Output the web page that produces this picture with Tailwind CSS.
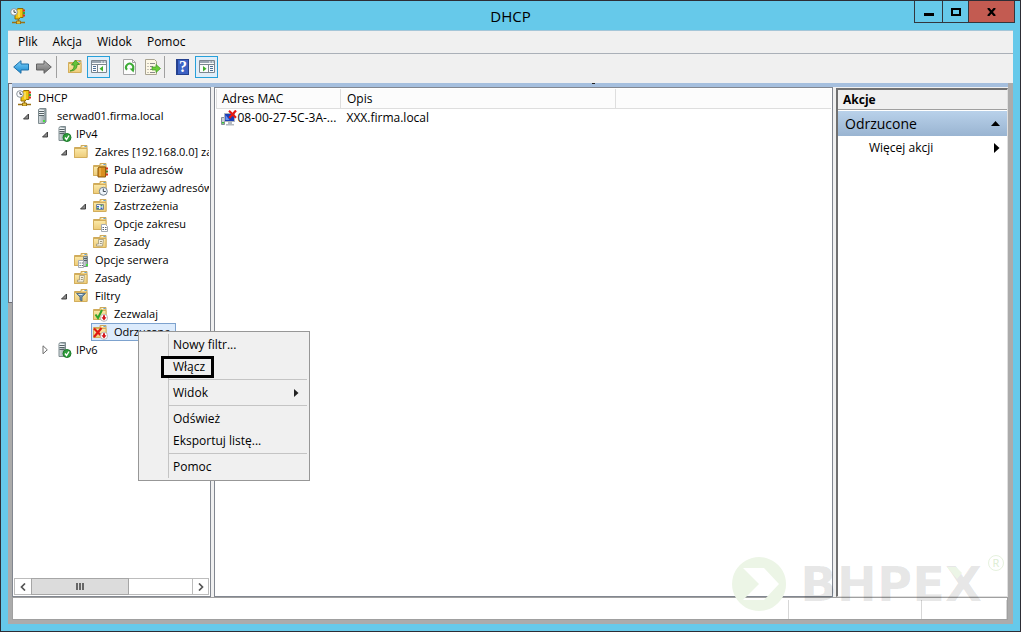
<!DOCTYPE html>
<html lang="pl">
<head>
<meta charset="utf-8">
<title>DHCP</title>
<meta name="viewport" content="width=device-width, initial-scale=1">
<script src="https://cdn.jsdelivr.net/npm/@tailwindcss/browser@4"></script>
</head>
<body class="relative flex h-screen flex-col overflow-hidden border border-[#2d2d35] bg-[#66c9ea] px-[7px] pb-[7px] font-['Open_Sans','Noto_Sans',sans-serif] text-[12px] leading-[18px] text-black">

<svg class="absolute size-0" aria-hidden="true">
  <defs>
    <linearGradient id="gf" x1="0" y1="0" x2="0" y2="1"><stop offset="0" stop-color="#fbe9a9"/><stop offset="1" stop-color="#edcb78"/></linearGradient>
    <linearGradient id="gs" x1="0" y1="0" x2="1" y2="0"><stop offset="0" stop-color="#d5dde0"/><stop offset="1" stop-color="#8b989c"/></linearGradient>
    <linearGradient id="gb" x1="0" y1="0" x2="0" y2="1"><stop offset="0" stop-color="#7fd0f8"/><stop offset="1" stop-color="#1688d0"/></linearGradient>
    <linearGradient id="gg" x1="0" y1="0" x2="0" y2="1"><stop offset="0" stop-color="#b5b5b5"/><stop offset="1" stop-color="#6c6c6c"/></linearGradient>
    <symbol id="folder" viewBox="0 0 16 16">
      <path d="M1.500 3.500h6.500v-2h6v12h-12.500z" fill="#f0d084" stroke="#cfaa5a"/>
      <path d="M9.500 2.500h2" stroke="#fff8dc"/><path d="M11.500 2.500h2" stroke="#5ba4e0"/>
      <path d="M1.500 4.500h12.500v9h-12.500z" fill="url(#gf)" stroke="#d3ae5c"/>
    </symbol>
    <symbol id="server" viewBox="0 0 16 16">
      <path d="M2.500 1.500l1.500-1h6v13.500l-1.500 1.500h-6z" fill="url(#gs)" stroke="#7f8c90"/>
      <path d="M3 3.500h5M3 5.500h5M3 7.500h5" stroke="#566266"/><path d="M3 2.500h5M3 4.500h5M3 6.500h5" stroke="#eef3f4"/>
      <path d="M7 12h2v2H7z" fill="#42e03c"/>
    </symbol>
    <symbol id="serverok" viewBox="0 0 16 16">
      <path d="M2 1.500l1.500-1h5v13l-1 1h-5.500z" fill="url(#gs)" stroke="#7f8c90"/>
      <path d="M2.500 3.500h5M2.500 5.500h5M2.500 7.500h5" stroke="#566266"/><path d="M2.500 2.500h5M2.500 4.500h5" stroke="#eef3f4"/>
      <circle cx="10" cy="11.500" r="4" fill="#2f9e3b" stroke="#1c7a2a"/>
      <path d="M8 11.500l1.500 2 2.500-4" fill="none" stroke="#fff" stroke-width="1.400"/>
    </symbol>
    <symbol id="dhcp" viewBox="0 0 16 16">
      <path d="M6 2l2-1.500h5v9h-2.500L9 11H5V7z" fill="#f0c30e" stroke="#8f6a08"/>
      <path d="M9 2v7" stroke="#fff09a"/>
      <path d="M13 2.500h2M13 7.500h2" stroke="#e02f1f" stroke-width="2"/><path d="M13 5h2" stroke="#36a83b" stroke-width="2"/>
      <path d="M8.500 11v3M2 14.500h13" stroke="#9a7216" stroke-width="1.500"/><path d="M6.500 13h4v3h-4z" fill="#e8c63d" stroke="#9a7216"/>
      <circle cx="4" cy="4" r="3.300" fill="#fafcff" stroke="#8c949c"/><path d="M4 2v2.300h2" fill="none" stroke="#444"/>
    </symbol>
    <symbol id="pool" viewBox="0 0 16 16"><use href="#folder"/>
      <path d="M6 6l1.500-1h6v10h-7.500z" fill="#d98f1f" stroke="#8b5a10"/><path d="M8 6v8" stroke="#f7c76a"/>
      <path d="M14 6.500h2M14 12.500h2" stroke="#d8321f" stroke-width="2"/><path d="M14 9.500h2" stroke="#4a7f2a" stroke-width="2"/></symbol>
    <symbol id="lease" viewBox="0 0 16 16"><use href="#folder"/>
      <circle cx="11.300" cy="11.300" r="4" fill="#eef4fb" stroke="#71808f"/><path d="M11.300 8.500v3h2.500" fill="none" stroke="#3b4652"/></symbol>
    <symbol id="reserv" viewBox="0 0 16 16"><use href="#folder"/>
      <path d="M4.500 6.500h7v5h-7z" fill="#f4f7fa" stroke="#7b8791"/><path d="M5 8h2v1.500h-2z M8.500 9.500h2V11h-2z" fill="#2f62c0"/><path d="M8.500 7h2v1.500h-2zM5 10h2v1h-2z" fill="#4d9a48"/></symbol>
    <symbol id="opts" viewBox="0 0 16 16"><use href="#folder"/>
      <path d="M9.500 8.500h4l2 2v5h-6z" fill="#fff" stroke="#a5abb2"/><path d="M10.500 11.500h1.500M13 11.500h1.500M10.500 13.500h1.500M13 13.500h1.500" stroke="#5b6672"/></symbol>
    <symbol id="srvopts" viewBox="0 0 16 16"><use href="#folder"/>
      <path d="M10.500 4.500h4v10h-4z" fill="url(#gs)" stroke="#7f8c90"/><path d="M11 6.500h3M11 8.500h3" stroke="#566266"/><path d="M13 12h2v2h-2z" fill="#42e03c"/>
      <path d="M5.500 8.500h5v7h-5z" fill="#fff" stroke="#a5abb2"/><path d="M6.500 11h1.300M8.700 11h1.300M6.500 13.500h1.300M8.700 13.500h1.300" stroke="#5b6672"/></symbol>
    <symbol id="policy" viewBox="0 0 16 16"><use href="#folder"/>
      <path d="M6.500 5.500h5l-1 6.500h-6v-2h2z" fill="#f3eee0" stroke="#a09878" stroke-width=".8"/><path d="M8 7.500h2M7.800 9.500h2" stroke="#a09878"/></symbol>
    <symbol id="filter" viewBox="0 0 16 16"><use href="#folder"/>
      <path d="M3.500 5.500h9l-3.500 3.500v4l-2-1v-3z" fill="#6c8dab" stroke="#46647f" stroke-width=".8"/><path d="M5.500 6.500h4" stroke="#d8e7f2"/></symbol>
    <symbol id="down" viewBox="0 0 16 16"><circle cx="12" cy="11.800" r="3.600" fill="#fff" stroke="#a9a9a9" stroke-width=".8"/><path d="M11 9.300h2v2h1.600L12 14.500l-2.600-3.200H11z" fill="#d3151a"/></symbol>
    <symbol id="allow" viewBox="0 0 16 16"><use href="#folder"/><path d="M3.500 8.500l2.500 3.500 4-8" fill="none" stroke="#2fa52b" stroke-width="2"/><use href="#down"/></symbol>
    <symbol id="deny" viewBox="0 0 16 16"><use href="#folder"/><path d="M2 4.500l8 8M9.500 4l-7.500 9" fill="none" stroke="#e01b12" stroke-width="2.200"/><use href="#down"/></symbol>
    <symbol id="open" viewBox="0 0 8 8"><path d="M6.500 2v5h-5z" fill="#8a8a8a" stroke="#333" stroke-width=".9"/></symbol>
    <symbol id="closed" viewBox="0 0 8 10"><path d="M2 .8v8L6.300 4.800z" fill="#fff" stroke="#6e6e6e"/></symbol>
    <symbol id="pc" viewBox="0 0 16 16">
      <path d="M.5 7.500h3v7h-3z" fill="#c9d0d6" stroke="#868e96"/><path d="M1 12h2v1.500H1z" fill="#35c035"/>
      <path d="M3.500 3.500h10v8h-10z" fill="#1a3fb8" stroke="#aeb4bd"/><path d="M4.500 5l4 5h-4z" fill="#6a93ef"/>
      <path d="M7 12h4v2h2v1.500H5V14h2z" fill="#b3b9bf"/>
      <path d="M8 .8l7 7M15 .5L8.300 8" stroke="#e51a14" stroke-width="2.200"/></symbol>
  </defs>
</svg>

<header class="relative flex h-[29px] shrink-0 items-center">
  <svg class="ml-[2px] size-4"><use href="#dhcp"/></svg>
  <h1 class="-ml-[18px] flex-1 text-center text-[15px]">DHCP</h1>
  <div class="absolute -top-px -right-[2px] flex h-[23px] border border-[#33363d]">
    <button class="flex w-[27px] items-center justify-center" aria-label="Minimalizuj"><svg class="h-[10px] w-[10px]"><path d="M0 6h10v3H0z"/></svg></button>
    <button class="flex w-[26px] items-center justify-center border-l border-[#33363d]" aria-label="Maksymalizuj"><svg class="h-[8px] w-[10px]"><path d="M1 1h8v6H1z" fill="none" stroke="#000" stroke-width="2"/></svg></button>
    <button class="flex w-[46px] items-center justify-center border-l border-[#33363d] bg-[#c35b51]" aria-label="Zamknij"><svg class="h-[8px] w-[9px]"><path d="M1 0l7 8M8 0L1 8" fill="none" stroke="#000" stroke-width="2.200"/></svg></button>
  </div>
</header>

<nav class="flex h-[24px] shrink-0 items-center gap-[15px] border-y border-t-[#a5c6d8] border-b-[#aab0b8] bg-[#f0f0f0] pl-[10px]">
  <button>Plik</button><button>Akcja</button><button>Widok</button><button>Pomoc</button>
</nav>

<div class="flex h-[29px] shrink-0 items-center bg-[#f0f0f0] pb-[4px] pl-[5px]" role="toolbar">
  <button aria-label="Wstecz"><svg class="h-[16px] w-[16px]"><path d="M.7 8L8 1.700V5h7.500v6H8v3.300z" fill="url(#gb)" stroke="#1c6fa8"/></svg></button>
  <button class="ml-[7px]" aria-label="Dalej"><svg class="h-[16px] w-[16px]"><path d="M15.300 8L8 1.700V5H.5v6H8v3.300z" fill="url(#gg)" stroke="#626262"/></svg></button>
  <span class="ml-[4px] h-[22px] w-px bg-[#a0a0a0]"></span>
  <button class="ml-[10px]" aria-label="W górę"><svg class="size-4" viewBox="0 0 16 16"><use href="#folder"/><path d="M3 12c3-1 4.500-3 4-6H4.500L8.500 1l4 4.500H10c.3 4-2.500 6.500-7 6.500z" fill="#62c33a" stroke="#3d8f22" stroke-width=".8"/></svg></button>
  <button class="ml-[4px] flex h-[22px] w-[23px] items-center justify-center border border-[#26a0da] bg-[#e0edf8]" aria-label="Pokaż drzewo konsoli"><svg class="h-[13px] w-[16px]"><path d="M.5.500h15v12H.5z" fill="#fbfbfb" stroke="#7c868f"/><path d="M1 1h14v2H1z" fill="#9aa6b1"/><path d="M10 2h1.500M13 2h1.500" stroke="#fff"/><path d="M1 4.500h14M6.500 5v8" stroke="#7c868f"/><path d="M2 6.500h3M2 8.500h3M2 10.500h3" stroke="#4b6f97"/><path d="M12 6v5.500L8.500 8.800z" fill="#3fae2a"/></svg></button>
  <button class="ml-[13px]" aria-label="Odśwież"><svg class="h-[16px] w-[13px]"><path d="M.5.500h9l3 3v12H.5z" fill="#fdfdfd" stroke="#a5a5a5"/><path d="M9.500.5v3h3" fill="none" stroke="#a5a5a5"/><path d="M4 10.800a3.600 3.600 0 1 1 5.500-.3" fill="none" stroke="#3cab35" stroke-width="2"/><path d="M6.500 9.500h5l-1 4z" fill="#3cab35"/></svg></button>
  <button class="ml-[9px]" aria-label="Eksportuj listę"><svg class="h-[16px] w-[16px]"><path d="M.5.500h9l2 2v13H.5z" fill="#fdf8e6" stroke="#a9a491"/><path d="M2.500 4.500h1M5 4.500h5M2.500 7.500h1M5 7.500h3M2.500 10.500h1M5 10.500h3M2.500 13.500h1M5 13.500h5" stroke="#8b8b8b"/><path d="M7 8h4V5.500l4.500 4-4.500 4V11H7z" fill="#6bcf3a" stroke="#3f9a22" stroke-width=".7"/></svg></button>
  <span class="ml-[3px] h-[22px] w-px bg-[#a0a0a0]"></span>
  <button class="ml-[11px] h-[16px] w-[13px] border border-l-2 border-[#25418f] bg-[#3d62c4] font-['Liberation_Serif',serif] text-[16px] leading-[14px] font-bold text-white" aria-label="Pomoc">?</button>
  <button class="ml-[6px] flex h-[22px] w-[23px] items-center justify-center border border-[#26a0da] bg-[#e0edf8]" aria-label="Pokaż okienko akcji"><svg class="h-[13px] w-[16px]"><path d="M.5.500h15v12H.5z" fill="#fbfbfb" stroke="#7c868f"/><path d="M1 1h14v2H1z" fill="#9aa6b1"/><path d="M10 2h1.500M13 2h1.500" stroke="#fff"/><path d="M1 4.500h14M9.500 5v8" stroke="#7c868f"/><path d="M11 6.500h3M11 8.500h3M11 10.500h3" stroke="#4b6f97"/><path d="M4 6v5.500L7.500 8.800z" fill="#3fae2a"/></svg></button>
</div>

<div class="flex min-h-0 flex-1 bg-[#ababab]">
  <div class="h-[220px] w-1 shrink-0 border border-r-0 border-[#6d6d75] bg-[#e6edf7]"></div>
  <div class="flex min-w-0 flex-1 flex-col">
    <div class="relative h-1 shrink-0 bg-[#a5bfde]"><i class="absolute top-0 left-[580px] h-px w-[3px] bg-[#222]"></i></div>
    <main class="flex min-h-0 flex-1 bg-[#f0f0f0]">
      <section class="flex w-[199px] shrink-0 flex-col overflow-hidden border border-[#828790] bg-white px-px pb-px" aria-label="Drzewo konsoli">
        <ul class="flex-1 overflow-hidden pt-px text-[11px] whitespace-nowrap" role="tree">
          <li class="flex h-[18px] items-center pl-[2px]"><svg class="size-4 shrink-0"><use href="#dhcp"/></svg><span class="ml-[6px]">DHCP</span></li>
          <li class="flex h-[18px] items-center pl-[8px]"><button class="mr-[6px]" aria-label="Zwiń"><svg class="size-2"><use href="#open"/></svg></button><svg class="size-4 shrink-0"><use href="#server"/></svg><span class="ml-[5px]">serwad01.firma.local</span></li>
          <li class="flex h-[18px] items-center pl-[27px]"><button class="mr-[8px]" aria-label="Zwiń"><svg class="size-2"><use href="#open"/></svg></button><svg class="size-4 shrink-0"><use href="#serverok"/></svg><span class="ml-[3px]">IPv4</span></li>
          <li class="flex h-[18px] items-center pl-[46px]"><button class="mr-[5px]" aria-label="Zwiń"><svg class="size-2"><use href="#open"/></svg></button><svg class="size-4 shrink-0"><use href="#folder"/></svg><span class="ml-[6px]">Zakres [192.168.0.0] za</span></li>
          <li class="flex h-[18px] items-center pl-[78px]"><svg class="size-4 shrink-0"><use href="#pool"/></svg><span class="ml-[6px]">Pula adresów</span></li>
          <li class="flex h-[18px] items-center pl-[78px]"><svg class="size-4 shrink-0"><use href="#lease"/></svg><span class="ml-[6px]">Dzierżawy adresów</span></li>
          <li class="flex h-[18px] items-center pl-[65px]"><button class="mr-[5px]" aria-label="Zwiń"><svg class="size-2"><use href="#open"/></svg></button><svg class="size-4 shrink-0"><use href="#reserv"/></svg><span class="ml-[6px]">Zastrzeżenia</span></li>
          <li class="flex h-[18px] items-center pl-[78px]"><svg class="size-4 shrink-0"><use href="#opts"/></svg><span class="ml-[6px]">Opcje zakresu</span></li>
          <li class="flex h-[18px] items-center pl-[78px]"><svg class="size-4 shrink-0"><use href="#policy"/></svg><span class="ml-[6px]">Zasady</span></li>
          <li class="flex h-[18px] items-center pl-[59px]"><svg class="size-4 shrink-0"><use href="#srvopts"/></svg><span class="ml-[6px]">Opcje serwera</span></li>
          <li class="flex h-[18px] items-center pl-[59px]"><svg class="size-4 shrink-0"><use href="#policy"/></svg><span class="ml-[6px]">Zasady</span></li>
          <li class="flex h-[18px] items-center pl-[46px]"><button class="mr-[5px]" aria-label="Zwiń"><svg class="size-2"><use href="#open"/></svg></button><svg class="size-4 shrink-0"><use href="#filter"/></svg><span class="ml-[6px]">Filtry</span></li>
          <li class="flex h-[18px] items-center pl-[78px]"><svg class="size-4 shrink-0"><use href="#allow"/></svg><span class="ml-[6px]">Zezwalaj</span></li>
          <li class="flex h-[18px] items-center pl-[77px]" aria-selected="true"><span class="flex h-[18px] items-center border border-[#7da2ce] bg-[#dcebfc] pr-[4px]"><svg class="size-4 shrink-0"><use href="#deny"/></svg><span class="ml-[6px]">Odrzucone</span></span></li>
          <li class="flex h-[18px] items-center pl-[27px]"><button class="mr-[8px]" aria-label="Rozwiń"><svg class="h-[10px] w-[8px]"><use href="#closed"/></svg></button><svg class="size-4 shrink-0"><use href="#serverok"/></svg><span class="ml-[3px]">IPv6</span></li>
        </ul>
        <div class="flex h-[17px] shrink-0 border border-[#bcbcbc]">
          <button class="flex w-[16px] items-center justify-center" aria-label="W lewo"><svg class="h-[8px] w-[6px]"><path d="M5 .5L1.500 4 5 7.500" fill="none" stroke="#555" stroke-width="1.700"/></svg></button>
          <div class="-my-px flex w-[98px] items-center justify-center gap-px border border-[#a6a6a6] bg-[#dcdcdc]"><i class="h-[7px] w-[2px] bg-[#666]"></i><i class="h-[7px] w-[2px] bg-[#666]"></i><i class="h-[7px] w-[2px] bg-[#666]"></i></div>
          <div class="flex-1"></div>
          <button class="flex w-[16px] items-center justify-center border-l border-[#bcbcbc]" aria-label="W prawo"><svg class="h-[8px] w-[6px]"><path d="M1 .5L4.500 4 1 7.500" fill="none" stroke="#555" stroke-width="1.700"/></svg></button>
        </div>
      </section>

      <section class="ml-[3px] min-w-0 flex-1 border border-[#828790] bg-white p-px">
        <table class="w-full table-fixed border-collapse text-left">
          <thead><tr class="h-[19px] border-b border-[#dedede] bg-[#fcfcfc]">
            <th class="w-[124px] border-r border-l border-[#dedede] p-0 pt-px pl-[5px] font-normal">Adres MAC</th>
            <th class="w-[275px] border-r border-[#dedede] p-0 pt-px pl-[6px] font-normal">Opis</th>
            <th class="p-0"></th></tr></thead>
          <tbody><tr class="h-[18px]">
            <td class="p-0 pl-[4px]"><div class="flex items-center gap-px whitespace-nowrap"><svg class="size-4 shrink-0"><use href="#pc"/></svg>08-00-27-5C-3A-...</div></td>
            <td class="p-0 pl-[6px]">XXX.firma.local</td><td></td></tr></tbody>
        </table>
      </section>

      <aside class="mt-px ml-[3px] w-[172px] shrink-0 border-t-2 border-r border-b border-l-2 border-t-[#707070] border-r-[#e0e0e0] border-b-[#e0e0e0] border-l-[#707070] bg-white">
        <h2 class="h-[20px] border-b border-[#a0a0a0] bg-[#f0f0f0] pl-[5px] leading-[19px] font-bold">Akcje</h2>
        <button class="mt-px flex h-[25px] w-full items-center justify-between bg-linear-to-b from-[#b9d1ea] to-[#99b4d1] pr-[7px] pl-[7px] text-[14px]">Odrzucone<svg class="h-[5px] w-[9px]"><path d="M0 5L4.500 0 9 5z"/></svg></button>
        <button class="mt-[3px] flex h-[18px] w-full items-center justify-between pr-[7px] pl-[31px]">Więcej akcji<svg class="h-[10px] w-[6px]"><path d="M0 0v10l5.500-5z"/></svg></button>
      </aside>
    </main>
    <footer class="flex h-[23px] shrink-0 border border-[#a0a0a0] bg-white pt-[2px]">
      <div class="flex-1"></div><div class="w-[133px] border-l border-[#d7d7d7]"></div><div class="w-[86px] border-x border-[#d7d7d7]"></div>
    </footer>
    <div class="h-1 shrink-0"></div>
  </div>
  <div class="w-[5px] shrink-0"></div>
</div>

<div class="pointer-events-none absolute right-[16px] bottom-[16px] flex h-[62px] items-center" aria-hidden="true">
  <svg class="h-[56px] w-[56px]" viewBox="0 0 56 56"><path fill-rule="evenodd" d="M28 1a27 27 0 1 0 .1 0zM12 12h21l15 16-15 16H12l16-16z" fill="#ecf5e6"/></svg>
  <div class="relative ml-[13px]">
    <span class="block font-['DejaVu_Sans',sans-serif] text-[48px] leading-[62px] font-bold text-black/10">BHPEX</span>
    <svg class="absolute top-[14px] right-[20px] h-[12px] w-[16px]"><path d="M1 0h9l6 6-5 6z" fill="#ecf5e6"/></svg>
  </div>
  <span class="mb-[42px] ml-[6px] flex size-4 items-center justify-center rounded-full border border-[#e6f2de] text-[11px] text-[#dcedd2]">R</span>
</div>

<div class="absolute top-[330px] left-[137px] w-[172px] border border-[#979797] bg-[#f0f0f0] p-[2px]" role="menu">
  <div class="border-l border-transparent bg-[linear-gradient(#c4c4c4,#c4c4c4)] bg-[length:1px_100%] bg-[position:26px_0] bg-no-repeat">
    <button class="block h-[22px] w-full pl-[31px] text-left" role="menuitem">Nowy filtr...</button>
    <button class="block h-[22px] w-full pl-[19px] text-left" role="menuitem"><span class="block h-[22px] w-[53px] border-[3px] border-black bg-[#f0f0f0] pl-[9px] leading-[16px]">Włącz</span></button>
    <hr class="my-[1px] ml-[27px] border-[#c4c4c4] pb-px">
    <button class="flex h-[22px] w-full items-center justify-between pr-[8px] pl-[31px]" role="menuitem">Widok<svg class="h-[8px] w-[5px]"><path d="M0 0v8l4.500-4z" fill="#222"/></svg></button>
    <hr class="my-[1px] ml-[27px] border-[#c4c4c4] pb-px">
    <button class="block h-[22px] w-full pl-[31px] text-left" role="menuitem">Odśwież</button>
    <button class="block h-[22px] w-full pl-[31px] text-left" role="menuitem">Eksportuj listę...</button>
    <hr class="my-[1px] ml-[27px] border-[#c4c4c4] pb-px">
    <button class="block h-[22px] w-full pl-[31px] text-left" role="menuitem">Pomoc</button>
  </div>
</div>
</body>
</html>
